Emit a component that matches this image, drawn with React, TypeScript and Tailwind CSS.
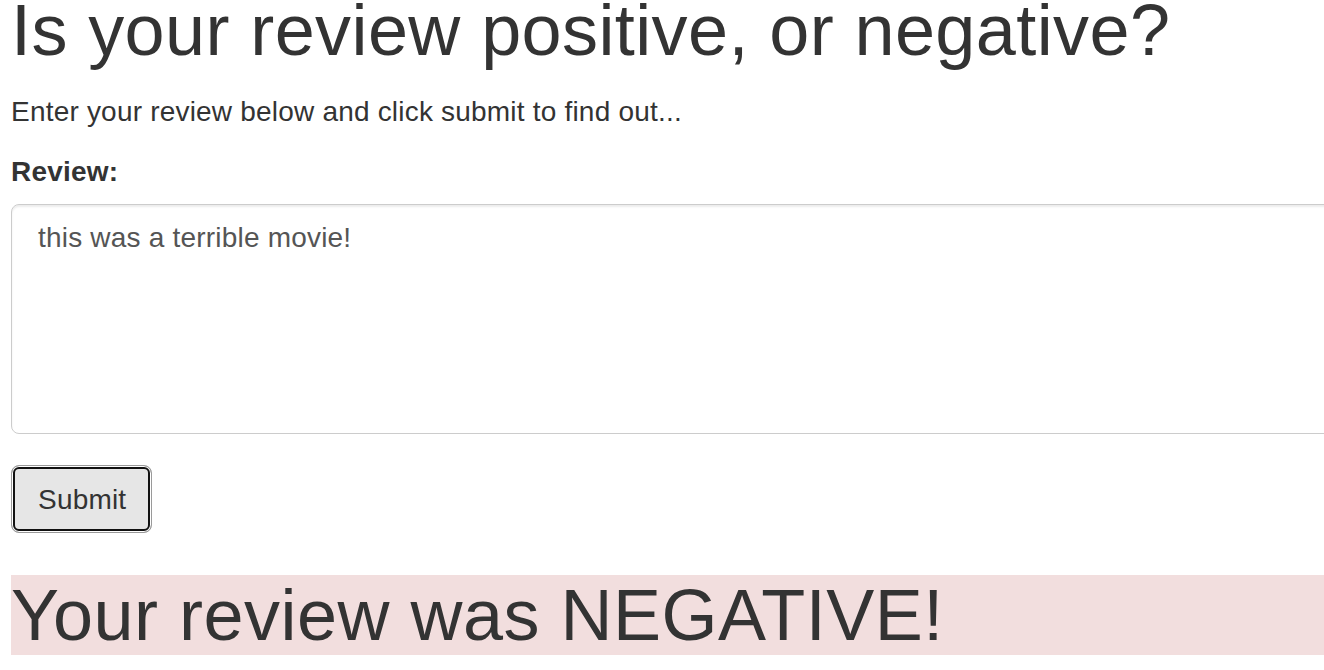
import { useState } from "react";

const App = () => {
    const [review, setReview] = useState("this was a terrible movie!");

    return (
        <div className="min-h-screen overflow-hidden bg-white text-[#333] font-['Liberation_Sans',Arial,sans-serif]">
            <div className="w-[1360px] pl-[11px]">
                {/* Title */}
                <h1 className="text-[72px] leading-[60px] font-normal tracking-[0.4px]">
                    Is your review positive, or negative?
                </h1>
                <p className="mt-[32px] text-[28px] leading-[40px] tracking-[0.2px]">
                    Enter your review below and click submit to find out...
                </p>

                {/* Form */}
                <form onSubmit={(e) => e.preventDefault()}>
                    <label htmlFor="review" className="block mt-[20px] text-[28px] leading-[40px] font-bold tracking-[0.2px]">
                        Review:
                    </label>
                    <textarea
                        id="review"
                        value={review}
                        onChange={(e) => setReview(e.target.value)}
                        className="block w-full h-[230px] mt-[12px] pl-[26px] pr-6 pt-[13px] text-[28px] leading-[40px] tracking-[0.2px] text-[#555] bg-white border border-[#ccc] rounded-[8px] shadow-[inset_0_2px_2px_rgba(0,0,0,0.075)] outline-none resize-none"
                    />
                    <button
                        type="submit"
                        className="block mt-[31px] pl-[26px] pr-[25px] pt-[14px] pb-[12px] text-[28px] leading-[40px] tracking-[0.2px] text-[#333] bg-[#e6e6e6] border border-[#9a9a9a] rounded-[8px] shadow-[inset_0_0_0_1px_#fff,inset_0_0_0_3px_#111]"
                    >
                        Submit
                    </button>
                </form>

                {/* Result */}
                <h1 className="mt-[42px] text-[72px] leading-[80px] font-normal tracking-[0.5px] bg-[#f2dede]">
                    Your review was NEGATIVE!
                </h1>
            </div>
        </div>
    );
};

export default App;
